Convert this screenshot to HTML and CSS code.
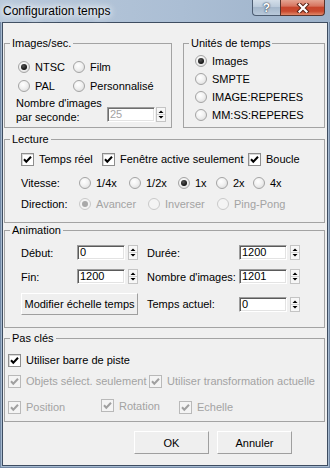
FILE: index.html
```html
<!DOCTYPE html>
<html lang="fr">
<head>
  <meta charset="UTF-8" />
  <title>Configuration temps</title>
  <link rel="stylesheet" href="styles.css">
</head>
<body>
  <div class="window">
    <div class="titlebar">
      <span class="title">Configuration temps</span>
      <div class="caption-buttons">
        <span class="cap help">?</span>
        <span class="cap close">
          <svg width="14" height="10" viewBox="0 0 14 10">
            <path d="M3.5 1.5 L10.5 8.5 M10.5 1.5 L3.5 8.5" stroke="#5b2418" stroke-width="4.2" stroke-linecap="square" />
            <path d="M3.5 1.5 L10.5 8.5 M10.5 1.5 L3.5 8.5" stroke="#fff" stroke-width="2.2" stroke-linecap="square" />
          </svg>
        </span>
      </div>
    </div>

    <div class="client">
      <div class="top-row">
        <fieldset class="group fps">
          <legend>Images/sec.</legend>
          <div class="fps-radios">
            <label class="opt"><span class="radio on"></span>NTSC</label>
            <label class="opt"><span class="radio"></span>Film</label>
            <label class="opt"><span class="radio"></span>PAL</label>
            <label class="opt"><span class="radio"></span>Personnalisé</label>
          </div>
          <div class="fps-count">
            <span class="fps-label">Nombre d'images<br>par seconde:</span>
            <span class="spin tight">
              <span class="field disabled">25</span>
              <span class="arrows"><svg width="8" height="13" viewBox="0 0 8 13"><path d="M1.5 5 L6.5 5 L4 2.5 Z M1.5 8 L6.5 8 L4 10.5 Z" fill="#000" /><path d="M0 6.5 H8" stroke="#d4d4d4" stroke-width="1" /></svg></span>
            </span>
          </div>
        </fieldset>

        <fieldset class="group units">
          <legend>Unités de temps</legend>
          <div class="units-list">
            <label class="opt"><span class="radio on"></span>Images</label>
            <label class="opt"><span class="radio"></span>SMPTE</label>
            <label class="opt"><span class="radio"></span>IMAGE:REPERES</label>
            <label class="opt"><span class="radio"></span>MM:SS:REPERES</label>
          </div>
        </fieldset>
      </div>

      <fieldset class="group lecture">
        <legend>Lecture</legend>
        <div class="row checks-row">
          <label class="opt w81"><span class="check on"><svg width="11" height="11" viewBox="0 0 11 11"><path d="M2 5.3 L4.3 7.8 L9 2.8" fill="none" stroke="#000" stroke-width="2" /></svg></span>Temps réel</label>
          <label class="opt w146"><span class="check on"><svg width="11" height="11" viewBox="0 0 11 11"><path d="M2 5.3 L4.3 7.8 L9 2.8" fill="none" stroke="#000" stroke-width="2" /></svg></span>Fenêtre active seulement</label>
          <label class="opt"><span class="check on"><svg width="11" height="11" viewBox="0 0 11 11"><path d="M2 5.3 L4.3 7.8 L9 2.8" fill="none" stroke="#000" stroke-width="2" /></svg></span>Boucle</label>
        </div>
        <div class="row speed-row">
          <span class="row-label">Vitesse:</span>
          <label class="opt w50"><span class="radio"></span>1/4x</label>
          <label class="opt w49"><span class="radio"></span>1/2x</label>
          <label class="opt w38"><span class="radio on"></span>1x</label>
          <label class="opt w37"><span class="radio"></span>2x</label>
          <label class="opt"><span class="radio"></span>4x</label>
        </div>
        <div class="row dir-row">
          <span class="row-label">Direction:</span>
          <label class="opt w69 disabled"><span class="radio on"></span>Avancer</label>
          <label class="opt w69 disabled"><span class="radio"></span>Inverser</label>
          <label class="opt disabled"><span class="radio"></span>Ping-Pong</label>
        </div>
      </fieldset>

      <fieldset class="group animation">
        <legend>Animation</legend>
        <div class="anim-grid">
          <span>Début:</span>
          <span class="spin">
            <span class="field">0</span>
            <span class="arrows"><svg width="8" height="13" viewBox="0 0 8 13"><path d="M1.5 5 L6.5 5 L4 2.5 Z M1.5 8 L6.5 8 L4 10.5 Z" fill="#000" /><path d="M0 6.5 H8" stroke="#d4d4d4" stroke-width="1" /></svg></span>
          </span>
          <span></span>
          <span>Durée:</span>
          <span class="spin">
            <span class="field">1200</span>
            <span class="arrows"><svg width="8" height="13" viewBox="0 0 8 13"><path d="M1.5 5 L6.5 5 L4 2.5 Z M1.5 8 L6.5 8 L4 10.5 Z" fill="#000" /><path d="M0 6.5 H8" stroke="#d4d4d4" stroke-width="1" /></svg></span>
          </span>

          <span>Fin:</span>
          <span class="spin">
            <span class="field">1200</span>
            <span class="arrows"><svg width="8" height="13" viewBox="0 0 8 13"><path d="M1.5 5 L6.5 5 L4 2.5 Z M1.5 8 L6.5 8 L4 10.5 Z" fill="#000" /><path d="M0 6.5 H8" stroke="#d4d4d4" stroke-width="1" /></svg></span>
          </span>
          <span></span>
          <span>Nombre d'images:</span>
          <span class="spin">
            <span class="field">1201</span>
            <span class="arrows"><svg width="8" height="13" viewBox="0 0 8 13"><path d="M1.5 5 L6.5 5 L4 2.5 Z M1.5 8 L6.5 8 L4 10.5 Z" fill="#000" /><path d="M0 6.5 H8" stroke="#d4d4d4" stroke-width="1" /></svg></span>
          </span>

          <button class="btn scale-btn">Modifier échelle temps</button>
          <span></span>
          <span>Temps actuel:</span>
          <span class="spin">
            <span class="field">0</span>
            <span class="arrows"><svg width="8" height="13" viewBox="0 0 8 13"><path d="M1.5 5 L6.5 5 L4 2.5 Z M1.5 8 L6.5 8 L4 10.5 Z" fill="#000" /><path d="M0 6.5 H8" stroke="#d4d4d4" stroke-width="1" /></svg></span>
          </span>
        </div>
      </fieldset>

      <fieldset class="group keys">
        <legend>Pas clés</legend>
        <div class="row keys-row1">
          <label class="opt"><span class="check on"><svg width="11" height="11" viewBox="0 0 11 11"><path d="M2 5.3 L4.3 7.8 L9 2.8" fill="none" stroke="#000" stroke-width="2" /></svg></span>Utiliser barre de piste</label>
        </div>
        <div class="row keys-row2">
          <label class="opt w141 disabled"><span class="check on"><svg width="11" height="11" viewBox="0 0 11 11"><path d="M2 5.3 L4.3 7.8 L9 2.8" fill="none" stroke="#a0a0a0" stroke-width="2" /></svg></span>Objets sélect. seulement</label>
          <label class="opt disabled"><span class="check on"><svg width="11" height="11" viewBox="0 0 11 11"><path d="M2 5.3 L4.3 7.8 L9 2.8" fill="none" stroke="#a0a0a0" stroke-width="2" /></svg></span>Utiliser transformation actuelle</label>
        </div>
        <div class="row keys-row3">
          <label class="opt w93 disabled"><span class="check on"><svg width="11" height="11" viewBox="0 0 11 11"><path d="M2 5.3 L4.3 7.8 L9 2.8" fill="none" stroke="#a0a0a0" stroke-width="2" /></svg></span>Position</label>
          <label class="opt w78 disabled raised"><span class="check on"><svg width="11" height="11" viewBox="0 0 11 11"><path d="M2 5.3 L4.3 7.8 L9 2.8" fill="none" stroke="#a0a0a0" stroke-width="2" /></svg></span>Rotation</label>
          <label class="opt disabled"><span class="check on"><svg width="11" height="11" viewBox="0 0 11 11"><path d="M2 5.3 L4.3 7.8 L9 2.8" fill="none" stroke="#a0a0a0" stroke-width="2" /></svg></span>Echelle</label>
        </div>
      </fieldset>

      <div class="dialog-buttons">
        <button class="btn">OK</button>
        <button class="btn">Annuler</button>
      </div>
    </div>
  </div>
</body>
</html>
```

FILE: styles.css
```css
* {
  box-sizing: border-box;
}

body {
  margin: 0;
  font-family: "Liberation Sans", Arial, sans-serif;
  font-size: 11px;
  color: #000;
}

.window {
  width: 330px;
  height: 468px;
  background: #a7bbd1;
  box-shadow: inset 0 0 0 1px #7489a5;
  overflow: hidden;
}

/* title bar */
.titlebar {
  height: 22px;
  display: flex;
  align-items: flex-start;
  background: linear-gradient(to right, #b9c9db, #abbed4 55%, #9db2ca);
}

.title {
  padding-left: 3px;
  line-height: 22px;
  font-size: 12px;
  text-shadow: 0 0 5px #fff, 0 0 8px #fff, 0 0 10px #e8eef5;
}

.caption-buttons {
  display: flex;
  margin-left: auto;
  margin-right: 5px;
}

.cap {
  height: 16px;
  display: flex;
  align-items: center;
  justify-content: center;
  border: 1px solid #4d5d72;
  border-top: none;
}

.help {
  width: 28px;
  border-right: none;
  border-radius: 0 0 0 4px;
  background: linear-gradient(#d3dee9, #bccbdb 45%, #a5b7cb 50%, #b9c9da);
  color: #fff;
  font-weight: bold;
  font-size: 12px;
  text-shadow: 0 0 1px #2d3b4d, 0 0 2px #2d3b4d;
}

.close {
  width: 45px;
  border-color: #5a342c;
  border-radius: 0 0 4px 0;
  background: linear-gradient(#e4a492, #d77560 40%, #c7452c 50%, #c94a2f 75%, #e2896a);
}

/* dialog body */
.client {
  margin-left: 2px;
  width: 326px;
  height: 444px;
  border: 1px solid #3e4d61;
  background: #f0f0f0;
  padding: 14px 2px 0 1px;
}

.group {
  margin: 0;
  padding: 0;
  min-width: 0;
  border: 1px solid #a3a3a3;
}

.group legend {
  margin-left: 5px;
  padding: 0 2px;
  line-height: 13px;
}

.top-row {
  display: flex;
  gap: 11px;
}

.fps {
  width: 168px;
  height: 91px;
}

.units {
  flex: 1;
  height: 91px;
}

.lecture {
  height: 90px;
  margin-top: 5px;
}

.animation {
  height: 104px;
  margin-top: 1px;
}

.keys {
  height: 90px;
  margin-top: 4px;
}

/* options */
.opt {
  display: flex;
  align-items: center;
  gap: 5px;
  white-space: nowrap;
}

.opt.disabled {
  color: #a3a3a3;
}

.radio {
  position: relative;
  flex: none;
  width: 12px;
  height: 12px;
  border-radius: 50%;
  border: 1px solid #a4a4a4;
  background: radial-gradient(circle at 40% 35%, #fff 0, #f1f1f1 45%, #d6d6d6 100%);
}

.radio.on::after {
  content: "";
  position: absolute;
  left: 2px;
  top: 2px;
  width: 6px;
  height: 6px;
  border-radius: 50%;
  background: radial-gradient(circle at 40% 35%, #555, #111 70%);
}

.disabled .radio {
  border-color: #c9c9c9;
  background: #f4f4f4;
}

.disabled .radio.on::after {
  background: #a9a9a9;
}

.check {
  flex: none;
  width: 13px;
  height: 13px;
  border: 1px solid #8e8e8e;
  background: #fff;
  box-shadow: inset 1px 1px 0 #d8d8d8;
}

.check svg {
  display: block;
}

.disabled .check {
  border-color: #b9b9b9;
  background: #f4f4f4;
  box-shadow: none;
}

.w37 { width: 37px; }
.w38 { width: 38px; }
.w49 { width: 49px; }
.w50 { width: 50px; }
.w69 { width: 69px; }
.w78 { width: 78px; }
.w81 { width: 81px; }
.w93 { width: 93px; }
.w141 { width: 141px; }
.w146 { width: 146px; }

/* Images/sec. */
.fps-radios {
  display: grid;
  grid-template-columns: 55px auto;
  grid-auto-rows: 19px;
  padding: 7px 0 0 13px;
}

.fps-count {
  display: flex;
  align-items: flex-end;
  margin-top: 1px;
  padding-left: 11px;
}

.fps-label {
  width: 91px;
  line-height: 14px;
}

.fps-count .spin {
  margin-bottom: 2px;
}

.units-list {
  display: grid;
  grid-auto-rows: 18px;
  padding: 2px 0 0 11px;
}

/* spinners */
.spin {
  display: flex;
  gap: 3px;
}

.spin.tight {
  gap: 1px;
}

.field {
  width: 48px;
  height: 15px;
  padding: 0 2px;
  line-height: 13px;
  background: #fff;
  border: 1px solid;
  border-color: #9c9c9c #fff #fff #9c9c9c;
  box-shadow: inset 1px 1px 0 #5a5a5a, inset -1px -1px 0 #e3e3e3;
}

.field.disabled {
  color: #a3a3a3;
  box-shadow: inset 1px 1px 0 #6e6e6e, inset -1px -1px 0 #e3e3e3;
}

.arrows {
  width: 10px;
  height: 15px;
  border: 1px solid #c4c4c4;
  background: #f7f7f7;
}

.arrows svg {
  display: block;
}

/* Lecture */
.row {
  display: flex;
  align-items: center;
}

.checks-row {
  height: 20px;
  margin-top: 3px;
  padding-left: 16px;
}

.speed-row {
  height: 20px;
  margin-top: 4px;
  padding-left: 16px;
}

.dir-row {
  height: 20px;
  margin-top: 1px;
  padding-left: 16px;
}

.row-label {
  width: 58px;
}

/* Animation */
.anim-grid {
  display: grid;
  grid-template-columns: 56px 61px 9px 92px 61px;
  grid-template-rows: 15px 15px 22px;
  row-gap: 9px;
  align-items: center;
  padding: 8px 0 0 16px;
}

.scale-btn {
  grid-column: 1 / 3;
  height: 22px;
}

/* Pas clés */
.keys-row1 {
  height: 16px;
  margin-top: 7px;
  padding-left: 3px;
}

.keys-row2 {
  height: 16px;
  margin-top: 5px;
  padding-left: 3px;
}

.keys-row3 {
  height: 16px;
  margin-top: 10px;
  padding-left: 3px;
}

.raised {
  margin-top: -3px;
}

/* buttons */
.btn {
  margin: 0;
  padding: 0;
  font-family: inherit;
  font-size: 11px;
  color: #000;
  background: #efefef;
  border: 1px solid;
  border-color: #fff #9f9f9f #9f9f9f #fff;
  box-shadow: 0 0 0 0 transparent;
}

.dialog-buttons {
  display: flex;
  gap: 8px;
  margin-top: 9px;
  padding-left: 130px;
}

.dialog-buttons .btn {
  width: 75px;
  height: 23px;
}
```
